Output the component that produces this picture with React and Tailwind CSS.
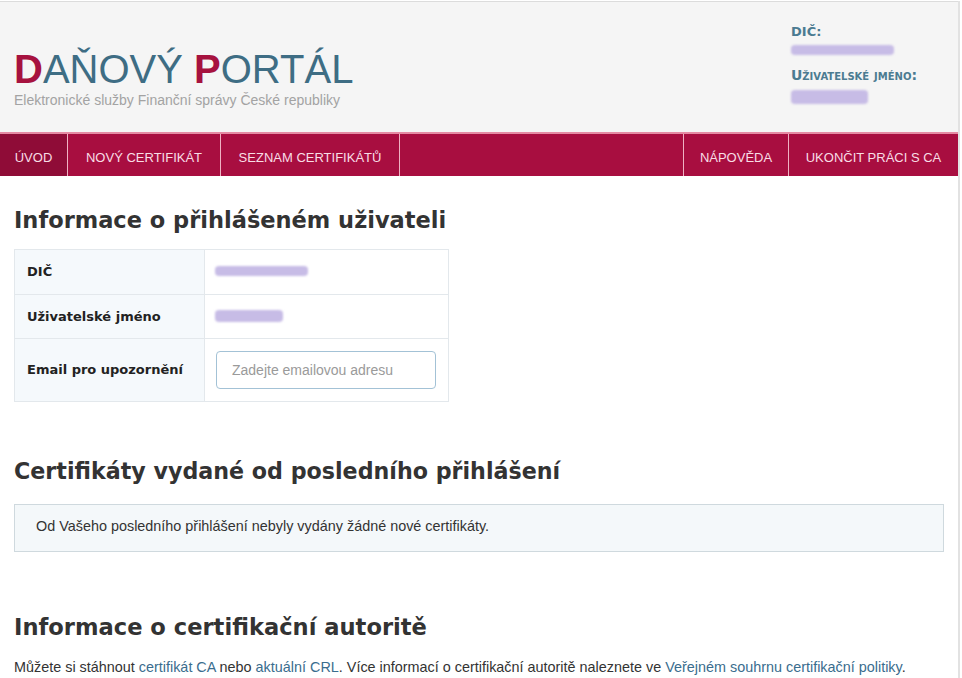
import React from "react";

const Blob = ({ w, h, className = "" }) => (
  <div
    className={`rounded-[4px] bg-[#c7bce6] blur-[0.8px] ${className}`}
    style={{ width: w, height: h }}
  />
);

export default function App() {
  const verdana = "font-['DejaVu_Sans',Verdana,sans-serif]";
  const arial = "font-['Liberation_Sans',Arial,sans-serif]";
  return (
    <div className="w-[962px] h-[678px] bg-white overflow-hidden">
      <div className="w-[960px] h-[678px] border-r-2 border-[#e2e2e2]">
        {/* Header */}
        <div className="mt-px h-[131px] bg-[#f5f5f5] border-t border-[#dcdcdc] flex justify-between">
          <div className={`pl-[14px] pt-[47px] ${arial}`}>
            <div className="text-[40px] leading-[40px] text-[#3e6d84] whitespace-nowrap">
              <span className="font-bold text-[#a6123f]">D</span>AŇOVÝ{" "}
              <span className="font-bold text-[#a6123f]">P</span>ORTÁL
            </div>
            <div className="mt-[3px] text-[14px] leading-[16px] text-[#a3a3a3] whitespace-nowrap">
              Elektronické služby Finanční správy České republiky
            </div>
          </div>
          <div className={`w-[167px] pt-[22px] ${verdana} font-bold text-[#4b7b91] text-[13px] leading-[16px]`}>
            <div>DIČ:</div>
            <Blob w={103} h={10} className="mt-[5px] bg-[#c4b3dc]" />
            <div className="mt-[12px] [font-variant:small-caps] text-[14px] leading-[17px] whitespace-nowrap">Uživatelské jméno:</div>
            <Blob w={77} h={14} className="mt-[6px]" />
          </div>
        </div>

        {/* Nav */}
        <div className={`h-[44px] bg-[#a80e40] border-t-2 border-[#e58aa3] flex justify-between text-[13px] leading-[16px] text-[#f8dde5] ${arial}`}>
          <div className="flex h-full">
            <div className="w-[68px] bg-[#8f0c37] border-r border-[#efb2c3] flex items-center justify-center pt-[5px]">ÚVOD</div>
            <div className="w-[153px] border-r border-[#efb2c3] flex items-center justify-center pt-[5px]">NOVÝ CERTIFIKÁT</div>
            <div className="w-[179px] border-r border-[#efb2c3] flex items-center justify-center pt-[5px]">SEZNAM CERTIFIKÁTŮ</div>
          </div>
          <div className="flex h-full">
            <div className="w-[105px] border-l border-[#efb2c3] flex items-center justify-center pt-[5px]">NÁPOVĚDA</div>
            <div className="w-[170px] border-l border-[#efb2c3] flex items-center justify-center pt-[5px]">UKONČIT PRÁCI S CA</div>
          </div>
        </div>

        {/* Main */}
        <div className="px-[14px]">
          <h1 className={`mt-[30px] ${verdana} font-bold text-[22.5px] leading-[28px] text-[#333]`}>
            Informace o přihlášeném uživateli
          </h1>

          <div className={`mt-[15px] w-[435px] border border-[#e3e8ec] ${verdana} text-[13px] text-[#222]`}>
            <div className="flex h-[45px] border-b border-[#e3e8ec]">
              <div className="w-[190px] bg-[#f5f9fc] border-r border-[#e3e8ec] pl-[12px] flex items-center font-bold">DIČ</div>
              <div className="flex-1 pl-[10px] flex items-center">
                <Blob w={93} h={10} className="mt-[-2px]" />
              </div>
            </div>
            <div className="flex h-[44px] border-b border-[#e3e8ec]">
              <div className="w-[190px] bg-[#f5f9fc] border-r border-[#e3e8ec] pl-[12px] flex items-center font-bold">Uživatelské jméno</div>
              <div className="flex-1 pl-[10px] flex items-center">
                <Blob w={68} h={12} className="mt-[-1px]" />
              </div>
            </div>
            <div className="flex h-[62px]">
              <div className="w-[190px] bg-[#f5f9fc] border-r border-[#e3e8ec] pl-[12px] flex items-center font-bold">Email pro upozornění</div>
              <div className="flex-1 pl-[11px] flex items-center">
                <input
                  type="text"
                  placeholder="Zadejte emailovou adresu"
                  className={`w-[220px] h-[38px] rounded-[4px] border border-[#a3c2d6] bg-white pl-[15px] text-[14px] ${arial} placeholder:text-[#9a9a9a] outline-none`}
                />
              </div>
            </div>
          </div>

          <h2 className={`mt-[55px] ${verdana} font-bold text-[22.2px] leading-[28px] text-[#333]`}>
            Certifikáty vydané od posledního přihlášení
          </h2>

          <div className={`mt-[19px] border border-[#cfd9de] bg-[#f4f8fa] pl-[21px] pt-[12px] pb-[16px] text-[14.4px] leading-[18px] text-[#333] ${arial}`}>
            Od Vašeho posledního přihlášení nebyly vydány žádné nové certifikáty.
          </div>

          <h2 className={`mt-[61px] ${verdana} font-bold text-[22.6px] leading-[28px] text-[#333]`}>
            Informace o certifikační autoritě
          </h2>

          <p className={`mt-[16px] text-[14.4px] leading-[20px] text-[#333] whitespace-nowrap ${arial}`}>
            Můžete si stáhnout <a className="text-[#3a6d8e]">certifikát CA</a> nebo{" "}
            <a className="text-[#3a6d8e]">aktuální CRL</a>. Více informací o certifikační autoritě naleznete ve{" "}
            <a className="text-[#3a6d8e]">Veřejném souhrnu certifikační politiky</a>.
          </p>
        </div>
      </div>
    </div>
  );
}
